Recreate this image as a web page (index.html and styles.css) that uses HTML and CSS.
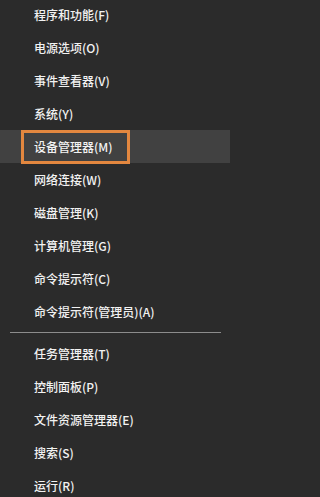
FILE: index.html
```html
<!DOCTYPE html>
<html lang="zh-CN">
<head>
<meta charset="utf-8">
<title>Win+X 菜单</title>
<link rel="stylesheet" href="styles.css">
</head>
<body>
<nav class="menu">
  <ul class="group">
    <li class="item"><span class="label">程序和功能(F)</span></li>
    <li class="item"><span class="label">电源选项(O)</span></li>
    <li class="item"><span class="label">事件查看器(V)</span></li>
    <li class="item"><span class="label">系统(Y)</span></li>
    <li class="item item-hover"><span class="label label-marked">设备管理器(M)</span></li>
    <li class="item"><span class="label">网络连接(W)</span></li>
    <li class="item"><span class="label">磁盘管理(K)</span></li>
    <li class="item"><span class="label">计算机管理(G)</span></li>
    <li class="item"><span class="label">命令提示符(C)</span></li>
    <li class="item"><span class="label">命令提示符(管理员)(A)</span></li>
  </ul>
  <hr class="separator">
  <ul class="group">
    <li class="item"><span class="label">任务管理器(T)</span></li>
    <li class="item"><span class="label">控制面板(P)</span></li>
    <li class="item"><span class="label">文件资源管理器(E)</span></li>
    <li class="item"><span class="label">搜索(S)</span></li>
    <li class="item"><span class="label">运行(R)</span></li>
  </ul>
</nav>
</body>
</html>
```

FILE: styles.css
```css
html, body {
  margin: 0;
  padding: 0;
  background: #2b2b2b;
}

body {
  font-family: "Noto Sans CJK SC", "Microsoft YaHei", sans-serif;
  font-size: 12px;
  font-weight: 500;
  color: #f2f2f2;
  overflow: hidden;
}

.menu {
  width: 230px;
  display: flex;
  flex-direction: column;
  margin-top: -2px;
}

.group {
  list-style: none;
  margin: 0;
  padding: 0;
  display: flex;
  flex-direction: column;
}

.item {
  height: 33px;
  display: flex;
  align-items: center;
  padding-left: 34px;
  box-sizing: border-box;
}

.item-hover {
  background: #414141;
  padding-left: 21px;
}

.label {
  line-height: 16px;
  white-space: nowrap;
}

.label-marked {
  display: flex;
  align-items: center;
  height: 34px;
  width: 109px;
  box-sizing: border-box;
  border: 3px solid #e3873f;
  padding-left: 10px;
}

.separator {
  border: 0;
  height: 1px;
  background: #8c8c8c;
  margin: 4px 9px 4px 10px;
}
```
